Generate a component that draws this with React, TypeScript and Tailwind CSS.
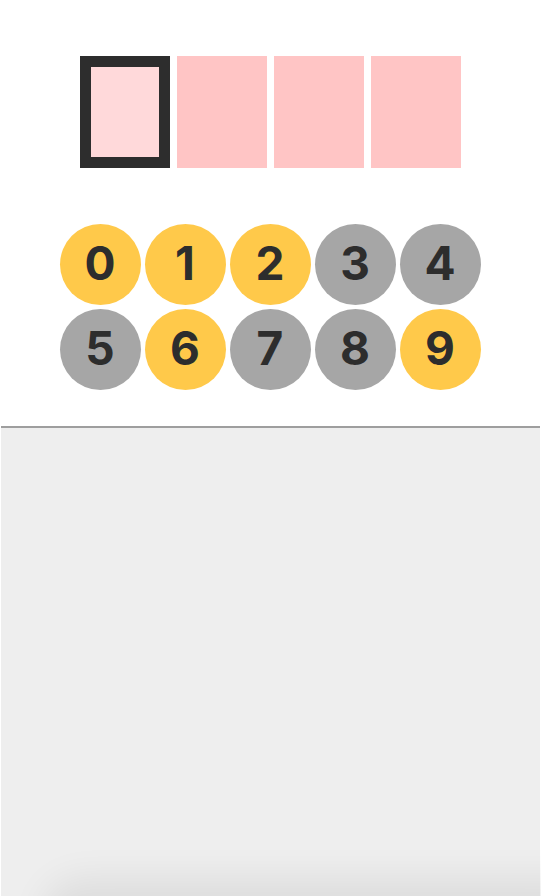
import React from 'react';

const DIGITS = [0, 1, 2, 3, 4, 5, 6, 7, 8, 9];
const USED = new Set([0, 1, 2, 6, 9]);

export default function App() {
  return (
    <div
      className="relative h-[896px] w-full overflow-hidden bg-white"
      style={{ fontFamily: 'Inter, Lato, sans-serif' }}
    >
      {/* Code slots */}
      <div className="flex justify-center gap-[7px] pr-[1px] pt-[56px]">
        <div className="h-[112px] w-[90px] border-[11px] border-[#2d2d2d] bg-[#ffd9da]" />
        <div className="h-[112px] w-[90px] bg-[#ffc5c5]" />
        <div className="h-[112px] w-[90px] bg-[#ffc5c5]" />
        <div className="h-[112px] w-[90px] bg-[#ffc5c5]" />
      </div>

      {/* Digit keypad */}
      <div className="mt-[56px] flex justify-center pr-[1px]">
        <div className="grid grid-cols-5 gap-[4px]">
          {DIGITS.map((d) => (
            <div
              key={d}
              className={
                'flex h-[81px] w-[81px] items-center justify-center rounded-full pb-[3px] text-[46px] font-bold text-[#2d2d2d] ' +
                (USED.has(d) ? 'bg-[#ffc94a]' : 'bg-[#a6a6a6]')
              }
            >
              {d}
            </div>
          ))}
        </div>
      </div>

      {/* Lower panel */}
      <div className="mt-[36px] ml-[1px] mr-[1px] h-[470px] border-t-2 border-[#9e9e9e] bg-[#eeeeee]" />

      {/* Shadow from the sheet below */}
      <div className="absolute -bottom-[44px] left-[60px] -right-[40px] h-[44px] rounded-[44px] bg-[#e4e4e4] shadow-[0_0_36px_18px_rgba(0,0,0,0.07)]" />
    </div>
  );
}
